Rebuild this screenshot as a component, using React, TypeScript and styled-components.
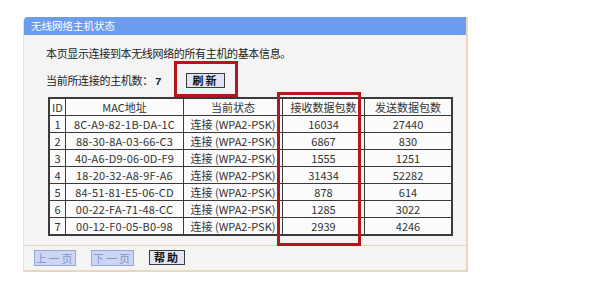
import React from 'react';
import styled, { createGlobalStyle } from 'styled-components';

interface Host {
  id: number;
  mac: string;
  status: string;
  rx: number;
  tx: number;
}

const hosts: Host[] = [
  { id: 1, mac: '8C-A9-82-1B-DA-1C', status: '连接 (WPA2-PSK)', rx: 16034, tx: 27440 },
  { id: 2, mac: '88-30-8A-03-66-C3', status: '连接 (WPA2-PSK)', rx: 6867, tx: 830 },
  { id: 3, mac: '40-A6-D9-06-0D-F9', status: '连接 (WPA2-PSK)', rx: 1555, tx: 1251 },
  { id: 4, mac: '18-20-32-A8-9F-A6', status: '连接 (WPA2-PSK)', rx: 31434, tx: 52282 },
  { id: 5, mac: '84-51-81-E5-06-CD', status: '连接 (WPA2-PSK)', rx: 878, tx: 614 },
  { id: 6, mac: '00-22-FA-71-48-CC', status: '连接 (WPA2-PSK)', rx: 1285, tx: 3022 },
  { id: 7, mac: '00-12-F0-05-B0-98', status: '连接 (WPA2-PSK)', rx: 2939, tx: 4246 },
];

const GlobalStyle = createGlobalStyle`
  body {
    margin: 0;
    background: #ffffff;
    font-family: "Noto Sans CJK SC", "Liberation Sans", sans-serif;
  }
`;

const Page = styled.div`
  padding: 17px 0 0 23px;
`;

const Panel = styled.div`
  position: relative;
  width: 442px;
  background: #f4f4f4;
  border-left: 1px solid #e4e4e4;
  border-right: 2px solid #e8d9bc;
  border-bottom: 2px solid #e8d9bc;
  border-top-left-radius: 4px;
`;

const TitleBar = styled.div`
  height: 18px;
  line-height: 18px;
  background: #6b9cee;
  color: #ffffff;
  font-size: 10.5px;
  padding-left: 7px;
  border-top-left-radius: 4px;
`;

const Body = styled.div`
  padding: 10px 0 9px 22px;
  border-bottom: 1px solid #e6d7bb;
`;

const Intro = styled.div`
  font-size: 11px;
  letter-spacing: -0.35px;
  line-height: 16px;
  color: #222;
`;

const CountRow = styled.div`
  display: flex;
  align-items: center;
  height: 16px;
  margin-top: 11px;
`;

const CountLabel = styled.span`
  width: 140px;
  font-size: 11px;
  letter-spacing: -0.3px;
  color: #222;

  b {
    font-family: "Liberation Mono", monospace;
    font-weight: bold;
    margin-left: 2px;
  }
`;

const Button = styled.button<{ $disabled?: boolean; $w: number }>`
  width: ${(p) => p.$w}px;
  height: ${(p) => (p.$disabled ? 16 : 15)}px;
  padding: 0;
  font-family: "Noto Sans CJK SC", sans-serif;
  font-size: 11px;
  line-height: 1;
  letter-spacing: 2px;
  font-weight: ${(p) => (p.$disabled ? 'normal' : 'bold')};
  color: ${(p) => (p.$disabled ? '#8796c8' : '#111')};
  background: ${(p) => (p.$disabled ? '#ccd5f4' : '#dfe4f6')};
  border: 1px solid ${(p) => (p.$disabled ? '#98a6d6' : '#3a3a3a')};
  border-radius: 0;
`;

const Grid = styled.table`
  margin: 9px 0 0 2px;
  width: 397px;
  border-collapse: collapse;
  border: 2px solid #3a3a3a;
  background: #fbfbfb;
  color: #333;
  font-size: 11px;
  table-layout: fixed;
`;

const HeadCell = styled.th<{ $w: number }>`
  width: ${(p) => p.$w}px;
  height: 16px;
  padding: 0;
  font-weight: normal;
  border: 1px solid #3a3a3a;
  text-align: center;
`;

const Cell = styled.td<{ $mono?: boolean }>`
  height: 16px;
  padding: 0;
  border: 1px solid #3a3a3a;
  text-align: center;
  white-space: nowrap;
  letter-spacing: ${(p) => (p.$mono ? '0.2px' : '0')};
`;

const Footer = styled.div`
  display: flex;
  gap: 15px;
  padding: 4px 0 4px 10px;
`;

const Mark = styled.div<{ $x: number; $y: number; $w: number; $h: number }>`
  position: absolute;
  left: ${(p) => p.$x}px;
  top: ${(p) => p.$y}px;
  width: ${(p) => p.$w}px;
  height: ${(p) => p.$h}px;
  border: 3px solid #b8141c;
  box-sizing: border-box;
  pointer-events: none;
`;

const columns = [
  { label: 'ID', w: 15 },
  { label: 'MAC地址', w: 117 },
  { label: '当前状态', w: 98 },
  { label: '接收数据包数', w: 81 },
  { label: '发送数据包数', w: 86 },
];

const App: React.FC = () => (
  <Page>
    <GlobalStyle />
    <Panel>
      <TitleBar>无线网络主机状态</TitleBar>
      <Body>
        <Intro>本页显示连接到本无线网络的所有主机的基本信息。</Intro>
        <CountRow>
          <CountLabel>
            当前所连接的主机数：<b>7</b>
          </CountLabel>
          <Button $w={39}>刷新</Button>
        </CountRow>
        <Grid>
          <thead>
            <tr>
              {columns.map((c) => (
                <HeadCell key={c.label} $w={c.w}>{c.label}</HeadCell>
              ))}
            </tr>
          </thead>
          <tbody>
            {hosts.map((h) => (
              <tr key={h.id}>
                <Cell>{h.id}</Cell>
                <Cell $mono>{h.mac}</Cell>
                <Cell>{h.status}</Cell>
                <Cell>{h.rx}</Cell>
                <Cell>{h.tx}</Cell>
              </tr>
            ))}
          </tbody>
        </Grid>
      </Body>
      <Footer>
        <Button $disabled $w={42}>上一页</Button>
        <Button $disabled $w={43}>下一页</Button>
        <Button $w={36}>帮助</Button>
      </Footer>
      <Mark $x={150} $y={44} $w={64} $h={36} />
      <Mark $x={253} $y={75} $w={84} $h={154} />
    </Panel>
  </Page>
);

export default App;
